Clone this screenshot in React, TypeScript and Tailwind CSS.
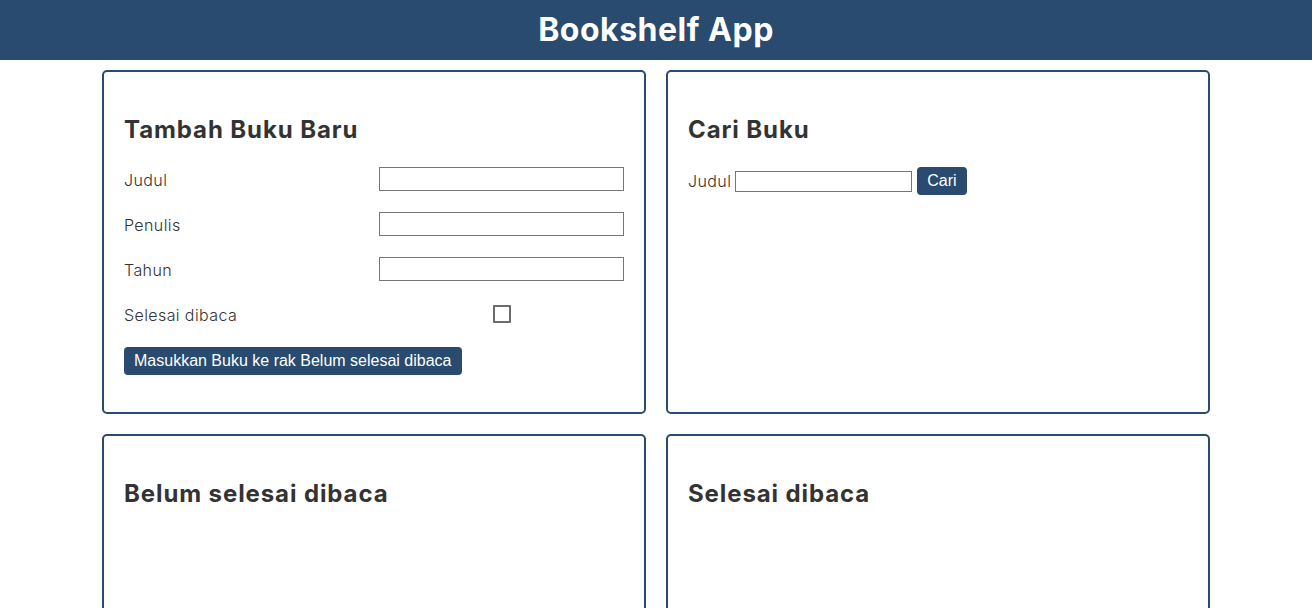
import React from "react";

const Card: React.FC<{ title: string; children?: React.ReactNode; className?: string }> = ({
  title,
  children,
  className,
}) => {
  return (
    <section
      className={
        "border-2 border-[#284b6f] rounded-[5px] px-5 pt-5 pb-5 " + (className || "")
      }
    >
      <h2 className="mt-5 text-[24px] leading-[36px] font-bold text-[#333333] tracking-[0.9px]">
        {title}
      </h2>
      {children}
    </section>
  );
};

export default function App() {
  return (
    <div className="min-h-screen bg-white font-['Inter',sans-serif]">
      <header className="h-[60px] bg-[#284b6f] flex items-center justify-center">
        <h1 className="text-[32px] font-bold text-white tracking-[0.5px]">Bookshelf App</h1>
      </header>

      <main className="w-[1108px] mx-auto mt-[10px] grid grid-cols-2 gap-5">
        <Card title="Tambah Buku Baru" className="h-[344px]">
          <form className="mt-[19px] grid grid-cols-[255px_245px] gap-y-[21px] text-[16px] font-light text-[#333333] tracking-[0.4px]">
            <label htmlFor="judul" className="h-6 leading-[26px]">Judul</label>
            <input id="judul" type="text" className="h-6 border border-[#767676] bg-white" />

            <label htmlFor="penulis" className="h-6 leading-[26px]">Penulis</label>
            <input id="penulis" type="text" className="h-6 border border-[#767676] bg-white" />

            <label htmlFor="tahun" className="h-6 leading-[26px]">Tahun</label>
            <input id="tahun" type="number" className="h-6 border border-[#767676] bg-white" />

            <label htmlFor="selesai" className="h-6 leading-[26px]">Selesai dibaca</label>
            <div className="h-6 flex items-center justify-center">
              <input
                id="selesai"
                type="checkbox"
                className="appearance-none w-[18px] h-[18px] border-2 border-[#6b6b6b] rounded-[1px] bg-white"
              />
            </div>

            <div className="col-span-2">
              <button
                type="button"
                className="h-7 px-[10px] rounded-[4px] bg-[#284b6f] text-white text-[16px] font-normal tracking-normal font-['Liberation_Sans',Arial,sans-serif]"
              >
                Masukkan Buku ke rak Belum selesai dibaca
              </button>
            </div>
          </form>
        </Card>

        <Card title="Cari Buku" className="h-[344px]">
          <form className="mt-[19px] flex items-center text-[16px] font-light text-[#333333] tracking-[0.4px]">
            <label htmlFor="cari" className="h-6 leading-6 mr-1">Judul</label>
            <input id="cari" type="text" className="w-[177px] h-[21px] border border-[#767676] bg-white" />
            <button
              type="button"
              className="ml-[5px] h-7 px-[10px] rounded-[4px] bg-[#284b6f] text-white text-[16px] font-normal tracking-normal font-['Liberation_Sans',Arial,sans-serif]"
            >
              Cari
            </button>
          </form>
        </Card>

        <Card title="Belum selesai dibaca" className="h-[344px]" />
        <Card title="Selesai dibaca" className="h-[344px]" />
      </main>
    </div>
  );
}
